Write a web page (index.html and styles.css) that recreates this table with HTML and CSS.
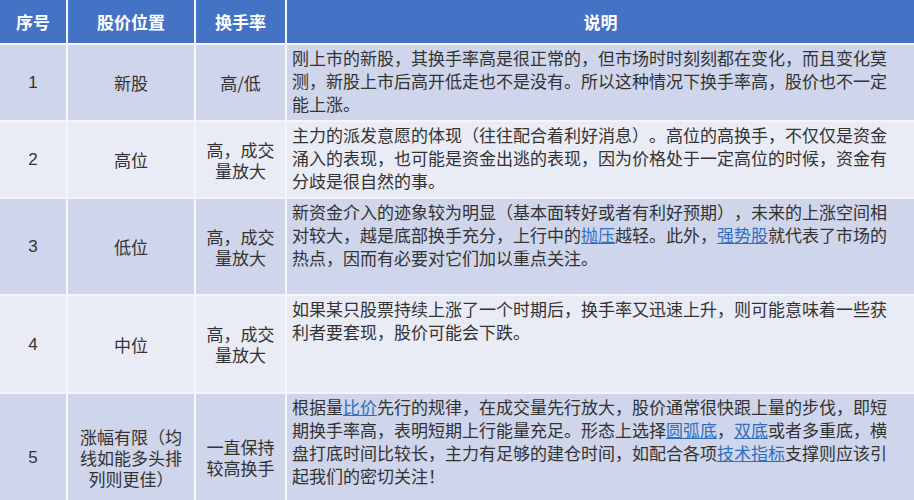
FILE: index.html
```html
<!DOCTYPE html>
<html lang="zh-CN">
<head>
<meta charset="utf-8">
<title>换手率</title>
<link rel="stylesheet" href="styles.css">
</head>
<body>
<div class="table">
  <div class="cell head">序号</div>
  <div class="cell head">股价位置</div>
  <div class="cell head">换手率</div>
  <div class="cell head">说明</div>

  <div class="cell dark num">1</div>
  <div class="cell dark">新股</div>
  <div class="cell dark">高/低</div>
  <div class="cell dark desc">刚上市的新股，其换手率高是很正常的，但市场时时刻刻都在变化，而且变化莫测，新股上市后高开低走也不是没有。所以这种情况下换手率高，股价也不一定能上涨。</div>

  <div class="cell light num">2</div>
  <div class="cell light">高位</div>
  <div class="cell light">高，成交量放大</div>
  <div class="cell light desc">主力的派发意愿的体现（往往配合着利好消息）。高位的高换手，不仅仅是资金涌入的表现，也可能是资金出逃的表现，因为价格处于一定高位的时候，资金有分歧是很自然的事。</div>

  <div class="cell dark num">3</div>
  <div class="cell dark">低位</div>
  <div class="cell dark">高，成交量放大</div>
  <div class="cell dark desc">新资金介入的迹象较为明显（基本面转好或者有利好预期），未来的上涨空间相对较大，越是底部换手充分，上行中的<a href="#">抛压</a>越轻。此外，<a href="#">强势股</a>就代表了市场的热点，因而有必要对它们加以重点关注。</div>

  <div class="cell light num">4</div>
  <div class="cell light">中位</div>
  <div class="cell light">高，成交量放大</div>
  <div class="cell light desc">如果某只股票持续上涨了一个时期后，换手率又迅速上升，则可能意味着一些获利者要套现，股价可能会下跌。</div>

  <div class="cell dark num">5</div>
  <div class="cell dark">涨幅有限（均线如能多头排列则更佳）</div>
  <div class="cell dark">一直保持较高换手</div>
  <div class="cell dark desc">根据量<a href="#">比价</a>先行的规律，在成交量先行放大，股价通常很快跟上量的步伐，即短期换手率高，表明短期上行能量充足。形态上选择<a href="#">圆弧底</a>，<a href="#">双底</a>或者多重底，横盘打底时间比较长，主力有足够的建仓时间，如配合各项<a href="#">技术指标</a>支撑则应该引起我们的密切关注！</div>
</div>
</body>
</html>
```

FILE: styles.css
```css
html, body {
  margin: 0;
  padding: 0;
  background: #ffffff;
  overflow: hidden;
}

body {
  width: 914px;
  height: 500px;
  font-family: "Noto Sans CJK SC", "Noto Sans", sans-serif;
  font-size: 17px;
  color: #333333;
  text-spacing-trim: space-all;
}

.table {
  display: grid;
  grid-template-columns: 66px 126px 89px 1fr;
  grid-template-rows: 43px 75px 75px 95px 96px 126px;
  gap: 2px;
  background: #f4f5fa;
  width: 914px;
}

.cell {
  display: flex;
  align-items: center;
  justify-content: center;
  text-align: center;
  line-height: 21px;
  padding: 0 4px;
}

.head {
  background: #4472c4;
  color: #ffffff;
  font-weight: bold;
  font-size: 17px;
}

.dark {
  background: #cfd5ea;
}

.light {
  background: #e9ebf5;
}

.num {
  font-family: "Liberation Sans", "Noto Sans", sans-serif;
  font-size: 17px;
}

.desc {
  display: block;
  text-align: left;
  line-height: 23px;
  padding: 1px 18px 0 5px;
  text-spacing-trim: space-all;
}

.desc a {
  color: #2f6fbf;
  text-decoration: underline;
}
```
